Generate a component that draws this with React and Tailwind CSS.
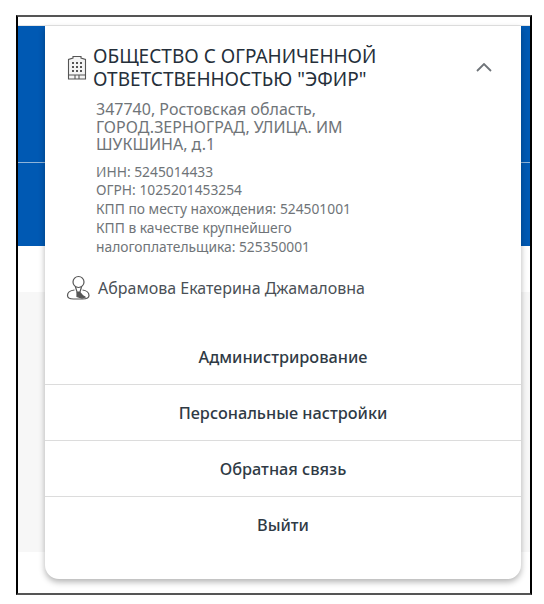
export default function App() {
  const items = ["Администрирование", "Персональные настройки", "Обратная связь", "Выйти"];
  return (
    <div className="w-[544px] h-[604px] bg-white pt-[15px] pl-[16px] overflow-hidden" style={{ fontFamily: '"Noto Sans", "Open Sans", sans-serif' }}>
      <div className="relative w-[516px] h-[580px] border-2 border-black border-t-[#555] border-b-[#555] border-r-black border-l-black overflow-hidden bg-white">
        <div className="h-[9px] border-b border-[#e5e5e5]" />
        <div className="h-[137px] bg-[#0059b3] border-b border-[#8fb4d9]" />
        <div className="h-[83px] bg-[#0059b3]" />
        <div className="h-[46px] bg-white" />
        <div className="h-[260px] bg-[#f7f7f7]" />
        <div className="absolute left-[27px] top-[9px] w-[476px] h-[553px] bg-white rounded-b-[14px] shadow-[0_3px_6px_rgba(0,0,0,0.3)] flex flex-col">
          <div className="flex pl-[22px] pr-[29px] pt-[18px]">
            <svg className="w-[20px] h-[27px] mt-[10px] shrink-0" viewBox="0 0 20 27" fill="none" stroke="#555" strokeWidth="1.1">
              <path d="M1.5 25V5.5L6 4V2.5h8V4l4.5 1.5V25Z" fill="#f4f4f4" />
              <path d="M5 9h2M9 9h2M13 9h2M5 13h2M9 13h2M13 13h2M5 17h2M9 17h2M13 17h2" strokeWidth="2" />
              <path d="M1.500 21h17M8 25v-4h4v4" />
            </svg>
            <div className="ml-[6px] flex-1 text-[19px] leading-[23px] text-[#252f3a] mt-[1px]">
              <div>ОБЩЕСТВО С ОГРАНИЧЕННОЙ</div>
              <div>ОТВЕТСТВЕННОСТЬЮ "ЭФИР"</div>
            </div>
            <svg className="w-[16px] h-[9px] mt-[19px] shrink-0" viewBox="0 0 16 9" fill="none" stroke="#6f7479" strokeWidth="1.8">
              <path d="M1 8l7-7 7 7" />
            </svg>
          </div>
          <div className="pl-[51px] pr-[60px] mt-[10px] text-[16px] leading-[17.5px] text-[#6f7478]">
            <div>347740, Ростовская область,</div>
            <div>ГОРОД.ЗЕРНОГРАД, УЛИЦА. ИМ</div>
            <div>ШУКШИНА, д.1</div>
          </div>
          <div className="pl-[51px] pr-[60px] mt-[9px] text-[13.8px] leading-[18.8px] text-[#6f7478]">
            <div>ИНН: 5245014433</div>
            <div>ОГРН: 1025201453254</div>
            <div>КПП по месту нахождения: 524501001</div>
            <div>КПП в качестве крупнейшего</div>
            <div>налогоплательщика: 525350001</div>
          </div>
          <div className="flex items-center pl-[21px] mt-[19px]">
            <svg className="w-[25px] h-[25px] shrink-0" viewBox="0 0 25 25" fill="none" stroke="#555" strokeWidth="1.2">
              <circle cx="12.500" cy="7" r="5.500" />
              <path d="M9.500 12 11 17h3l1.500-5" />
              <path d="M8.500 15C4 15.500 1.500 18 1.500 20.500s3 3.500 6 3.500h9c3 0 6.500-1 6.500-3.500S20.500 15.500 16.500 15" />
              <path d="M11 17.500h3l2.500 3 2.500 1.500-3 1-5-1.500Z" fill="#555" />
            </svg>
            <div className="ml-[7px] text-[16px] text-[#4a5056]">Абрамова Екатерина Джамаловна</div>
          </div>
          <div className="mt-[29px] flex flex-col">
            {items.map((t, i) => (
              <div key={t} className={`h-[56px] flex items-center justify-center text-[16.3px] font-medium text-[#2f3a45] ${i < 3 ? "border-b border-[#dcdcdc]" : ""}`}>
                {t}
              </div>
            ))}
          </div>
        </div>
      </div>
    </div>
  );
}
